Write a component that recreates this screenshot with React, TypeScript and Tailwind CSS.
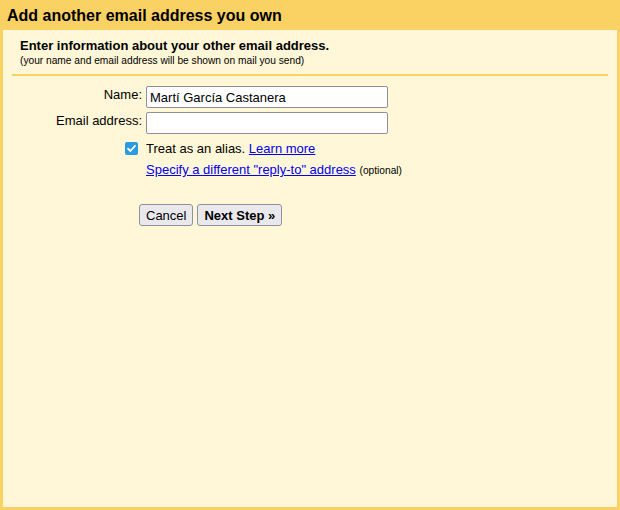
import React from "react";

export default function App() {
  return (
    <div
      className="w-[620px] h-[510px] bg-[#fad163] flex flex-col px-[3px] pb-[3px] text-black"
      style={{ fontFamily: '"Liberation Sans", Arial, sans-serif' }}
    >
      <div className="h-[30px] flex items-center pl-[4px] pt-[1px] text-[16px] font-bold leading-[20px]">
        Add another email address you own
      </div>
      <div className="flex-1 bg-[#fff7d7] flex flex-col">
        <div className="pl-[17px] pt-[8px]">
          <div className="text-[13px] font-bold leading-[16px]">
            Enter information about your other email address.
          </div>
          <div className="text-[10.2px] leading-[12px] mt-[1px]">
            (your name and email address will be shown on mail you send)
          </div>
        </div>
        <div className="mx-[9px] mt-[7px] h-[2px] bg-[#fad163]" />
        <div className="mt-[10px] flex flex-col gap-[4px]">
          <div className="flex items-start">
            <div className="w-[139px] text-right text-[13px] leading-[15px] pt-[1px]">Name:</div>
            <input
              type="text"
              defaultValue="Martí García Castanera"
              className="ml-[4px] w-[242px] h-[22px] border border-[#8f8f9d] rounded-[2px] bg-white px-[3px] text-[13px] outline-none"
              style={{ fontFamily: '"Liberation Sans", Arial, sans-serif' }}
            />
          </div>
          <div className="flex items-start">
            <div className="w-[139px] text-right text-[13px] leading-[15px] pt-[1px]">Email address:</div>
            <input
              type="text"
              className="ml-[4px] w-[242px] h-[22px] border border-[#8f8f9d] rounded-[2px] bg-white px-[3px] text-[13px] outline-none"
            />
          </div>
        </div>
        <div className="flex items-center mt-[7px] h-[14px]">
          <div className="w-[139px] flex justify-end pr-[4px]">
            <span className="w-[13px] h-[13px] rounded-[2px] bg-[#2a9be3] flex items-center justify-center">
              <svg width="11" height="11" viewBox="0 0 11 11">
                <path d="M2 5.6 L4.4 8 L9 2.8" fill="none" stroke="white" strokeWidth="1.8" strokeLinecap="round" strokeLinejoin="round" />
              </svg>
            </span>
          </div>
          <div className="ml-[4px] text-[13px] leading-[15px]">
            Treat as an alias.{" "}
            <a href="#" className="text-[#0000ee] underline">Learn more</a>
          </div>
        </div>
        <div className="flex mt-[7px]">
          <div className="w-[143px]" />
          <div className="text-[13px] leading-[15px]">
            <a href="#" className="text-[#0000ee] underline">Specify a different "reply-to" address</a>{" "}
            <span className="text-[10.2px]">(optional)</span>
          </div>
        </div>
        <div className="flex mt-[26px] pl-[136px] gap-[4px]">
          <button className="h-[22px] px-[6px] border border-[#8f8f9d] rounded-[3px] bg-[#e9e9ed] text-[13px] leading-[15px]">
            Cancel
          </button>
          <button className="h-[22px] px-[6px] border border-[#8f8f9d] rounded-[3px] bg-[#e9e9ed] text-[13px] leading-[15px] font-bold">
            Next Step »
          </button>
        </div>
      </div>
    </div>
  );
}
